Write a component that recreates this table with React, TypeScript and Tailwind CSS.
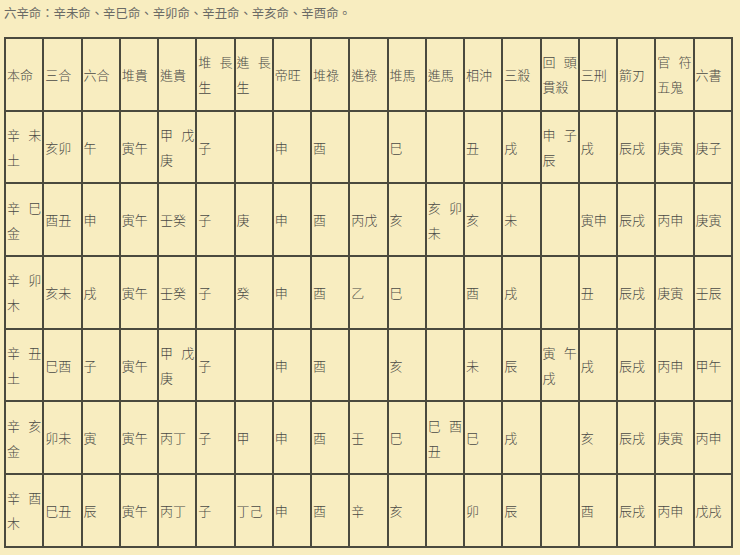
const headers = [
  '本命', '三合', '六合', '堆貴', '進貴', '堆長生', '進長生', '帝旺', '堆祿', '進祿',
  '堆馬', '進馬', '相沖', '三殺', '回頭貫殺', '三刑', '箭刃', '官符五鬼', '六書',
];

const rows: string[][] = [
  ['辛未土', '亥卯', '午', '寅午', '甲戊庚', '子', '', '申', '酉', '', '巳', '', '丑', '戌', '申子辰', '戌', '辰戌', '庚寅', '庚子'],
  ['辛巳金', '酉丑', '申', '寅午', '壬癸', '子', '庚', '申', '酉', '丙戊', '亥', '亥卯未', '亥', '未', '', '寅申', '辰戌', '丙申', '庚寅'],
  ['辛卯木', '亥未', '戌', '寅午', '壬癸', '子', '癸', '申', '酉', '乙', '巳', '', '酉', '戌', '', '丑', '辰戌', '庚寅', '壬辰'],
  ['辛丑土', '巳酉', '子', '寅午', '甲戊庚', '子', '', '申', '酉', '', '亥', '', '未', '辰', '寅午戌', '戌', '辰戌', '丙申', '甲午'],
  ['辛亥金', '卯未', '寅', '寅午', '丙丁', '子', '甲', '申', '酉', '壬', '巳', '巳酉丑', '巳', '戌', '', '亥', '辰戌', '庚寅', '丙申'],
  ['辛酉木', '巳丑', '辰', '寅午', '丙丁', '子', '丁己', '申', '酉', '辛', '亥', '', '卯', '辰', '', '酉', '辰戌', '丙申', '戊戌'],
];

function Cell({ text }: { text: string }) {
  return (
    <td className="border-2 border-[#4b4a3e] px-[1px] align-middle text-justify leading-[25px] break-all">
      {text}
    </td>
  );
}

export default function App() {
  return (
    <div
      className="min-h-[555px] w-[740px] bg-[#f8edc0] pl-1 text-[#4a4a46]"
      style={{ fontFamily: '"Noto Sans CJK TC", "Noto Sans", sans-serif' }}
    >
      {/* Title */}
      <p className="pt-[3px] text-[12.4px] leading-5 text-[#6a6a66]">
        六辛命：辛未命、辛巳命、辛卯命、辛丑命、辛亥命、辛酉命。
      </p>

      {/* Table */}
      <table className="mt-[14px] w-[729px] table-fixed border-collapse border-2 border-[#4b4a3e] text-[13px] font-light">
        <tbody>
          <tr className="h-[72.7px]">
            {headers.map((h, i) => (
              <Cell key={i} text={h} />
            ))}
          </tr>
          {rows.map((r, ri) => (
            <tr key={ri} className="h-[72.7px]">
              {r.map((c, ci) => (
                <Cell key={ci} text={c} />
              ))}
            </tr>
          ))}
        </tbody>
      </table>
    </div>
  );
}
